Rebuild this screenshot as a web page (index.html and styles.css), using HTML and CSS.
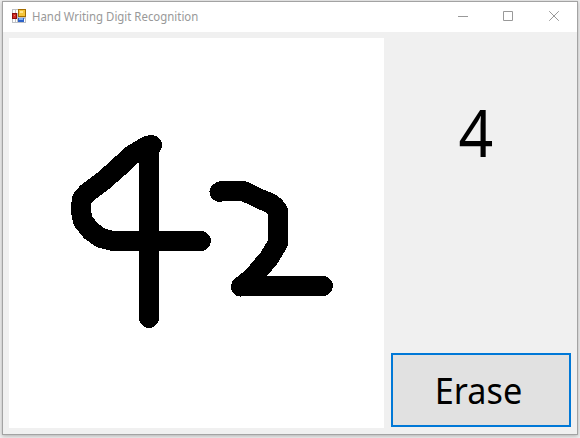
FILE: index.html
```html
<!DOCTYPE html>
<html lang="en">
<head>
<meta charset="utf-8">
<title>Hand Writing Digit Recognition</title>
<link rel="stylesheet" href="styles.css">
</head>
<body>
<main class="window">
  <header class="titlebar">
    <svg class="app-icon" width="14" height="14" viewBox="0 0 14 14" shape-rendering="crispEdges">
      <path d="M0 0H14V14H0Z" fill="#bfc1c4"/>
      <path d="M1 1H3V4H1ZM4 1H6V4H4ZM1 10H3V13H1ZM4 10H5V13H4ZM12 10H13V13H12Z" fill="#fff"/>
      <path d="M0 4H5V10H0Z" fill="#8d0c0c"/><path d="M1 5H4V9H1Z" fill="#cf2b22"/><path d="M2 6H3V7H2Z" fill="#f07860"/>
      <path d="M6 0H14V8H6Z" fill="#a46d00"/><path d="M7 1H13V7H7Z" fill="#f5c53a"/><path d="M8 2H11V4H8Z" fill="#ffe48c"/>
      <path d="M6 9H12V13H6Z" fill="#2c62c8"/><path d="M7 9H11V11H7Z" fill="#80b1f5"/>
    </svg>
    <h1 class="title">Hand Writing Digit Recognition</h1>
    <div class="controls">
      <svg width="10" height="10" viewBox="0 0 10 10"><path d="M0 5.5H10"/></svg>
      <svg width="10" height="10" viewBox="0 0 10 10"><path d="M.5.5H9.5V9.5H.5Z"/></svg>
      <svg class="close" width="10" height="10" viewBox="0 0 10 10"><path d="M.2.2 9.8 9.8M9.8.2.2 9.8"/></svg>
    </div>
  </header>
  <div class="client">
    <svg class="canvas" width="375" height="390" viewBox="9 38 375 390" shape-rendering="crispEdges">
      <path d="M152 145.2Q147 145 142 149L131 155.500L119 167L103 181L87 193L82 199L80.500 209L83 221L91 231L101 238L113 241H201"/>
      <path d="M149 147V318"/>
      <path d="M219.500 192 222 191H243L250 194L260 199L270 203Q275 206 278 211V243L269 258L258 271L252 278L241 286.500 244 286H323"/>
    </svg>
    <aside class="side">
      <output class="result"><span class="digit">4</span></output>
      <button class="erase"><span class="erase-label">Erase</span></button>
    </aside>
  </div>
</main>
</body>
</html>
```
FILE: styles.css
```css
* { box-sizing: border-box; }
body {
  margin: 0;
  height: 438px;
  padding: 1px 2px 3px;
  overflow: hidden;
  background: #f0f0f0;
  font-family: "Noto Sans", "Open Sans", sans-serif;
}
.window {
  width: 576px;
  height: 434px;
  border: 1px solid #a3a3a3;
  background: #f0f0f0;
  box-shadow: 0 1px 4px rgba(0, 0, 0, .28);
}
.titlebar {
  display: flex;
  align-items: center;
  height: 30px;
  padding: 0 18px 0 9px;
  background: #fff;
}
.app-icon { margin-top: -2px; }
.title {
  margin: 0 0 0 6px;
  color: #999;
  font-size: 12px;
  font-weight: 400;
  line-height: 16px;
  white-space: nowrap;
  transform: scaleX(.95);
  transform-origin: left;
}
.controls {
  display: flex;
  gap: 35px;
  margin-left: auto;
  margin-top: -2px;
  fill: none;
  stroke: #999;
}
.close { margin-left: 1px; }
.client {
  display: flex;
  gap: 7px;
  padding: 6px;
}
.canvas {
  background: #fff;
  fill: none;
  stroke: #000;
  stroke-width: 20px;
  stroke-linecap: round;
  stroke-linejoin: round;
}
.side {
  display: flex;
  flex-direction: column;
  justify-content: space-between;
  width: 180px;
  height: 389px;
}
.result {
  display: flex;
  justify-content: center;
  padding: 48px 11px 0 0;
  font-size: 66px;
  line-height: 90px;
}
.digit { transform: scaleX(.92); }
.erase {
  height: 74px;
  padding: 0;
  border: 2px solid #0078d7;
  background: #e1e1e1;
  color: #000;
  font: 37px/50px "Noto Sans", "Open Sans", sans-serif;
}
.erase-label {
  display: block;
  transform: translateX(-2.5px) scaleX(.925);
}
```
